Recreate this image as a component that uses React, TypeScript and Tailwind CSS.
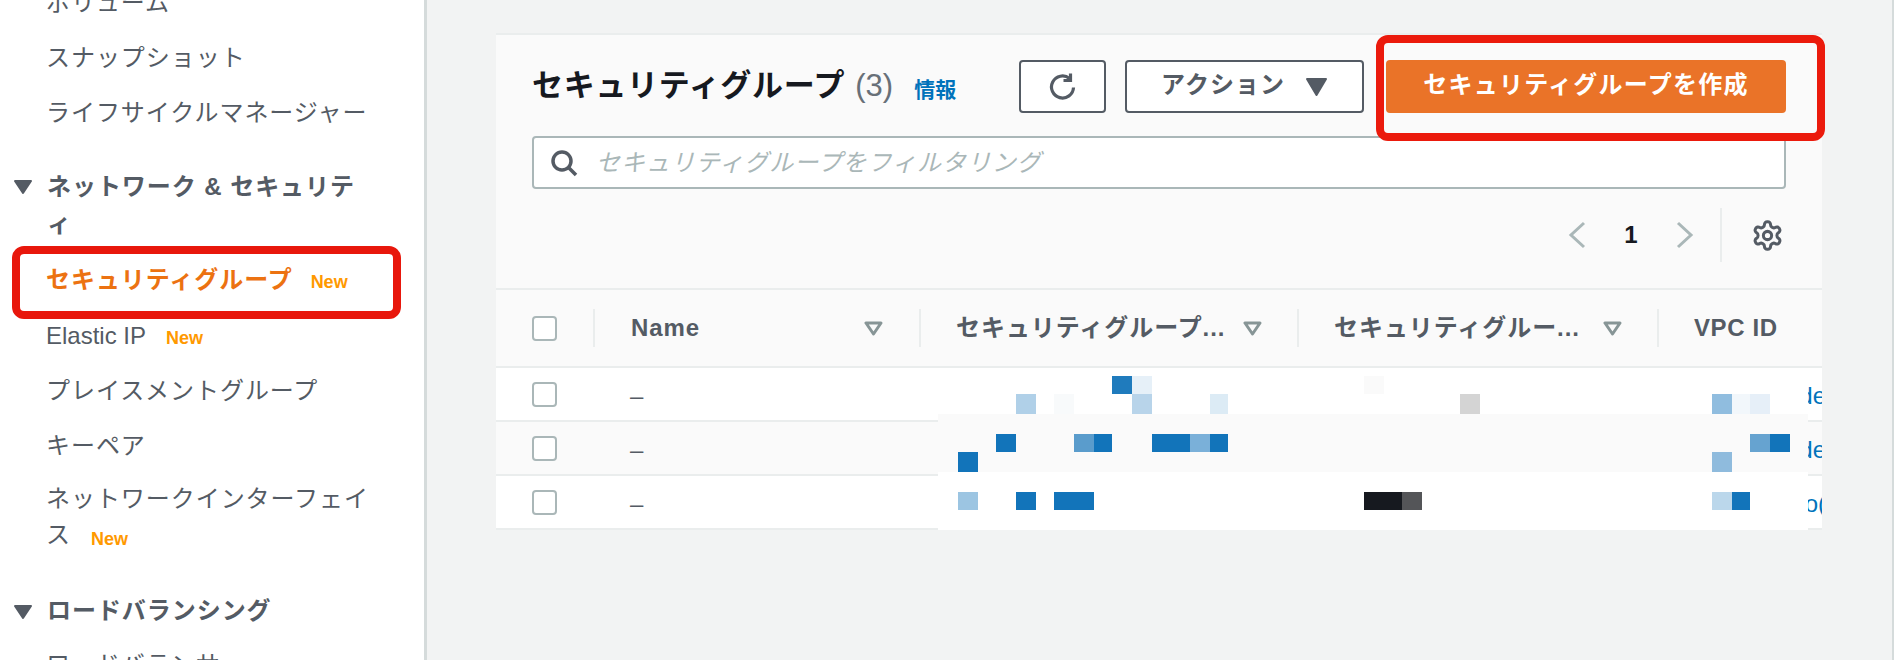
const cells: [number, number, number, number, string][] = [
  [1770, 370, 38, 44, "#ffffff"],
  [938, 414, 870, 58, "#fafafa"],
  [938, 472, 870, 58, "#ffffff"],
  [1112, 376, 20, 18, "#1f7bbd"],
  [1132, 376, 20, 18, "#e6f0f8"],
  [1364, 376, 20, 18, "#fafafa"],
  [1016, 394, 20, 20, "#b0d0e8"],
  [1054, 394, 20, 20, "#f8fafb"],
  [1132, 394, 20, 20, "#b8d4ea"],
  [1210, 394, 18, 20, "#dcebf5"],
  [1460, 394, 20, 20, "#d4d4d4"],
  [1712, 394, 20, 20, "#90bddf"],
  [1732, 394, 18, 20, "#f2f7fb"],
  [1750, 394, 20, 20, "#e6eff8"],
  [996, 434, 20, 18, "#1274ba"],
  [1074, 434, 20, 18, "#5a9ccc"],
  [1094, 434, 18, 18, "#1274ba"],
  [1152, 434, 38, 18, "#1274ba"],
  [1190, 434, 20, 18, "#7ab0d9"],
  [1210, 434, 18, 18, "#1274ba"],
  [1750, 434, 20, 18, "#66a3d0"],
  [1770, 434, 20, 18, "#1274ba"],
  [958, 452, 20, 20, "#1274ba"],
  [1712, 452, 20, 20, "#8fbbdd"],
  [958, 492, 20, 18, "#9cc5e2"],
  [1016, 492, 20, 18, "#1274ba"],
  [1054, 492, 40, 18, "#1274ba"],
  [1364, 492, 38, 18, "#16191f"],
  [1402, 492, 20, 18, "#545558"],
  [1712, 492, 20, 18, "#bbd7eb"],
  [1732, 492, 18, 18, "#1274ba"],
];

function Triangle() {
  return (
    <svg width="20" height="16" viewBox="0 0 20 16" className="shrink-0">
      <path d="M2 2h16l-8 12z" fill="#545b64" stroke="#545b64" strokeWidth="2" strokeLinejoin="round" />
    </svg>
  );
}

function FilterMark() {
  return (
    <svg width="19" height="15" viewBox="0 0 19 15" className="shrink-0">
      <path d="M2 2h15L9.500 13z" fill="#fafafa" stroke="#879596" strokeWidth="3" strokeLinejoin="round" />
    </svg>
  );
}

function New({ tight }: { tight?: boolean }) {
  return (
    <span className={`${tight ? "ml-[18px]" : "ml-5"} mt-[4px] text-[18px] font-bold tracking-normal text-[#ff9900]`}>
      New
    </span>
  );
}

function NavItem({ children }: { children: React.ReactNode }) {
  return <div className="flex h-[55px] items-center pl-[46px] leading-9">{children}</div>;
}

function Check() {
  return <div className="-ml-px h-[25px] w-[25px] rounded-[4px] border-2 border-[#aab7b8] bg-white" />;
}

function Sep() {
  return <div className="h-[38px] w-[2px] shrink-0 bg-[#eaeded]" />;
}

function Row({ bg, link }: { bg: string; link: string }) {
  return (
    <div className={`flex h-[54px] border-b-2 border-[#eaeded] ${bg}`}>
      <div className="flex w-[99px] items-center pl-[37px]">
        <Check />
      </div>
      <div className="flex flex-1 items-center pl-[35px] pt-[4px] text-[#545b64]">–</div>
      <div className="flex w-[24px] items-center justify-end overflow-hidden pt-[4px] text-[#0073bb]">
        <span className="-mr-[4px]">{link}</span>
      </div>
    </div>
  );
}

export default function App() {
  return (
    <div
      className="relative flex h-[660px] w-[1902px] overflow-hidden bg-white text-[24px] text-[#545b64]"
      style={{ fontFamily: '"Liberation Sans", "Noto Sans CJK JP", sans-serif' }}
    >
      <aside className="h-full w-[427px] shrink-0 overflow-hidden border-r-[3px] border-[#d5dbdb] bg-white">
        <div className="-mt-[25px] tracking-[0.95px]">
          <NavItem>ボリューム</NavItem>
          <NavItem>スナップショット</NavItem>
          <NavItem>ライフサイクルマネージャー</NavItem>
          <div className="mt-[28px] flex font-bold leading-[37px]">
            <div className="ml-[13px] mr-[14px] mt-[11px] shrink-0">
              <Triangle />
            </div>
            <div>
              ネットワーク & セキュリテ
              <br />ィ
            </div>
          </div>
          <div className="mt-[9px]">
            <div className="flex h-[57px] items-center pl-[46px] leading-9">
              <span className="font-bold text-[#ec7211]">セキュリティグループ</span>
              <New tight />
            </div>
            <NavItem>
              <span className="tracking-normal">Elastic IP</span>
              <New />
            </NavItem>
            <NavItem>プレイスメントグループ</NavItem>
            <NavItem>キーペア</NavItem>
            <div className="flex flex-col pl-[46px] pt-[8px] leading-9">
              <span>ネットワークインターフェイ</span>
              <span className="flex">
                ス<New />
              </span>
            </div>
          </div>
          <div className="mt-[36px] flex font-bold leading-9">
            <div className="ml-[13px] mr-[14px] mt-[11px] shrink-0">
              <Triangle />
            </div>
            <div>ロードバランシング</div>
          </div>
          <div className="mt-[8px]">
            <NavItem>ロードバランサー</NavItem>
          </div>
        </div>
      </aside>

      <main className="w-[1467px] shrink-0 border-r-2 border-[#d5dbdb] bg-[#f2f3f3] pl-[69px] pr-[70px] pt-[33px]">
        <section className="relative h-[497px] overflow-hidden border-t-2 border-[#eaeded] bg-[#fafafa]">
          <div className="pl-[36px] pr-[36px] pt-[25px]">
            <div className="flex h-[53px] items-center">
              <h1 className="text-[31px] font-bold tracking-[0.7px] text-[#16191f]">セキュリティグループ</h1>
              <span className="ml-[10px] text-[31px] text-[#687078]">(3)</span>
              <a className="ml-[21px] mt-[7px] text-[21px] font-bold text-[#0073bb]">情報</a>
              <button className="ml-auto flex h-[53px] w-[87px] items-center justify-center rounded-[4px] border-2 border-[#545b64] bg-white">
                <svg width="32" height="32" viewBox="0 0 32 32" fill="none" stroke="#545b64" strokeWidth="3.200">
                  <path d="M26.500 16.500a11 11 0 1 1-4-9" />
                  <path d="M23.500 2.500v7h-7" strokeLinejoin="miter" />
                </svg>
              </button>
              <button className="ml-[19px] flex h-[53px] w-[239px] items-center justify-center gap-[20px] rounded-[4px] border-2 border-[#545b64] bg-white font-bold tracking-[1px] text-[#545b64]">
                <span className="-mt-[4px]">アクション</span>
                <svg width="23" height="20" viewBox="0 0 23 20" className="shrink-0">
                  <path d="M2 2h19l-9.500 16z" fill="#545b64" stroke="#545b64" strokeWidth="2" strokeLinejoin="round" />
                </svg>
              </button>
              <button className="ml-[22px] flex h-[53px] w-[400px] items-center justify-center rounded-[4px] bg-[#ea7328] font-bold tracking-[1.250px] text-white">
                <span className="-mt-[4px]">セキュリティグループを作成</span>
              </button>
            </div>
            <div className="mt-[23px] flex h-[53px] items-center rounded-[4px] border-2 border-[#aab7b8] bg-white pl-[16px]">
              <svg width="28" height="28" viewBox="0 0 28 28" fill="none" stroke="#545b64" strokeWidth="3.500">
                <circle cx="12" cy="12" r="9" />
                <path d="M18.500 18.500L26 26" />
              </svg>
              <span className="ml-[18px] italic tracking-[0.95px] text-[#aab7b8]">セキュリティグループをフィルタリング</span>
            </div>
            <div className="mt-[19px] flex h-[54px] items-center justify-end pr-[2px]">
              <svg width="18" height="28" viewBox="0 0 18 28" fill="none" stroke="#aab7b8" strokeWidth="3">
                <path d="M16 2L3 14l13 12" />
              </svg>
              <span className="w-[90px] text-center font-bold text-[#16191f]">1</span>
              <svg width="18" height="28" viewBox="0 0 18 28" fill="none" stroke="#aab7b8" strokeWidth="3">
                <path d="M2 2l13 12L2 26" />
              </svg>
              <div className="ml-[26px] h-[54px] w-[2px] bg-[#eaeded]" />
              <svg className="ml-[29px]" width="33" height="33" viewBox="0 0 24 24" fill="none" stroke="#545b64" strokeWidth="2.200">
                <path d="M12.220 2h-.44a2 2 0 0 0-2 2v.18a2 2 0 0 1-1 1.730l-.43.25a2 2 0 0 1-2 0l-.15-.08a2 2 0 0 0-2.730.73l-.22.38a2 2 0 0 0 .73 2.730l.15.1a2 2 0 0 1 1 1.720v.51a2 2 0 0 1-1 1.740l-.15.09a2 2 0 0 0-.73 2.730l.22.38a2 2 0 0 0 2.730.73l.15-.08a2 2 0 0 1 2 0l.43.25a2 2 0 0 1 1 1.730V20a2 2 0 0 0 2 2h.44a2 2 0 0 0 2-2v-.18a2 2 0 0 1 1-1.730l.43-.25a2 2 0 0 1 2 0l.15.08a2 2 0 0 0 2.730-.73l.22-.39a2 2 0 0 0-.73-2.730l-.15-.08a2 2 0 0 1-1-1.740v-.5a2 2 0 0 1 1-1.740l.15-.09a2 2 0 0 0 .73-2.730l-.22-.38a2 2 0 0 0-2.730-.73l-.15.08a2 2 0 0 1-2 0l-.43-.25a2 2 0 0 1-1-1.730V4a2 2 0 0 0-2-2z" />
                <circle cx="12" cy="12" r="3" />
              </svg>
            </div>
          </div>
          <div className="mt-[26px] border-t-2 border-[#eaeded]">
            <div className="grid h-[78px] grid-cols-[99px_324px_378px_360px_1fr] border-b-2 border-[#eaeded] font-bold tracking-[0.95px]">
              <div className="flex items-center justify-between pl-[37px]">
                <Check />
                <Sep />
              </div>
              <div className="flex items-center justify-between pl-[36px] pr-[36px]">
                <span>Name</span>
                <FilterMark />
              </div>
              <div className="flex items-center">
                <Sep />
                <span className="ml-[35px] w-[287px]">セキュリティグループ...</span>
                <FilterMark />
              </div>
              <div className="flex items-center">
                <Sep />
                <span className="ml-[35px] w-[269px]">セキュリティグルー...</span>
                <FilterMark />
              </div>
              <div className="flex items-center">
                <Sep />
                <span className="ml-[35px] tracking-[0.6px]">VPC ID</span>
              </div>
            </div>
            <Row bg="bg-white" link="de" />
            <Row bg="bg-[#fafafa]" link="de" />
            <Row bg="bg-white" link="o(" />
          </div>
          <svg className="absolute left-[442px] top-[333px]" width="870" height="162" viewBox="938 368 870 162">
            {cells.map(([x, y, w, h, fill], i) => (
              <rect key={i} x={x} y={y} width={w} height={h} fill={fill} />
            ))}
          </svg>
        </section>
      </main>

      <div className="pointer-events-none absolute left-[12px] top-[246px] h-[73px] w-[389px] rounded-[12px] border-[8px] border-[#e8170c]" />
      <div className="pointer-events-none absolute left-[1376px] top-[35px] h-[106px] w-[449px] rounded-[12px] border-[8px] border-[#eb1a0c]" />
    </div>
  );
}
